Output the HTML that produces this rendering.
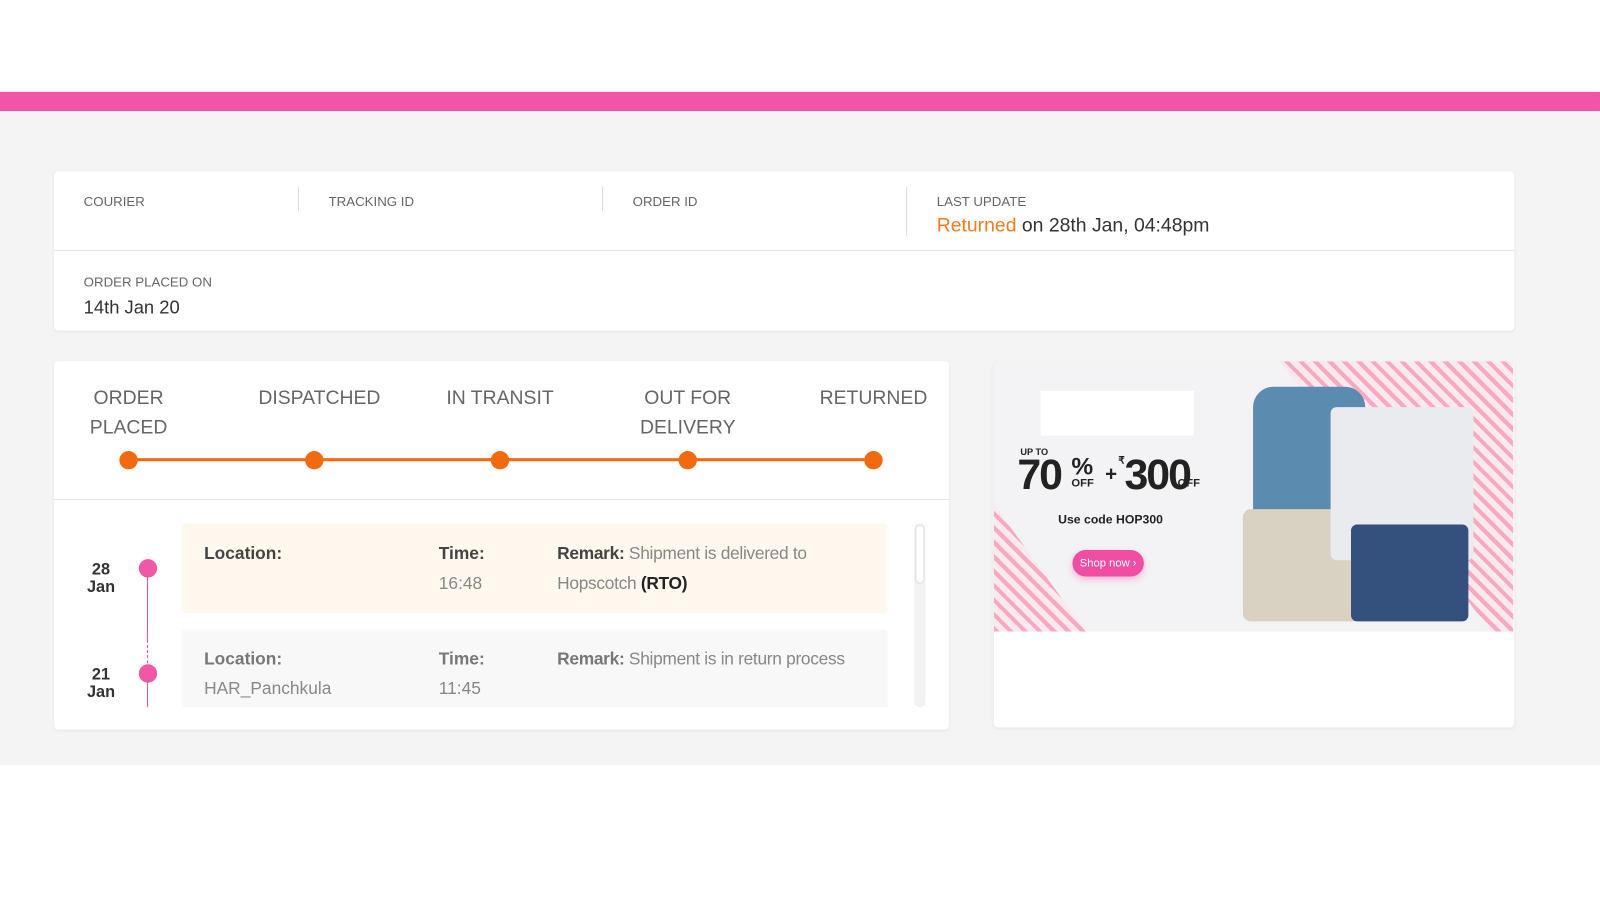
<!DOCTYPE html>
<html><head><meta charset="utf-8"><style>
*{box-sizing:border-box;margin:0;padding:0}
html,body{width:1600px;height:900px;overflow:hidden;background:#fff}
#w{width:1568px;height:882px;position:relative;transform:scale(1.0204);transform-origin:0 0;font-family:"Liberation Sans",sans-serif;color:#333}
.abs{position:absolute}
.pink{left:0;top:90px;width:1568px;height:19px;background:#f255a5}
.gray{left:0;top:109px;width:1568px;height:641px;background:#f4f4f4}
.card{background:#fff;border-radius:4px;box-shadow:0 1px 3px rgba(0,0,0,.06)}
.lbl{font-size:13px;color:#666}
.sep{width:1px;background:#ddd;height:24px;top:183px}
.st{font-size:19px;color:#666;text-align:center;line-height:29px}
.dot{width:18px;height:18px;border-radius:50%;background:#f26a10;top:442px}
.b{font-weight:bold;color:#444}
.t{font-size:17px;color:#888;line-height:29px}
.pd{width:18px;height:18px;border-radius:50%;background:#f057a4}
.dt{font-size:16px;font-weight:bold;color:#333;text-align:center;width:40px;line-height:17px}
</style></head><body><div id="w">
<div class="abs pink"></div>
<div class="abs gray"></div>

<div class="abs card" style="left:53px;top:168px;width:1431px;height:156px"></div>
<div class="abs" style="left:53px;top:245px;width:1431px;height:1px;background:#e6e6e6"></div>
<div class="abs lbl" style="left:82px;top:190px">COURIER</div>
<div class="abs sep" style="left:292px"></div>
<div class="abs lbl" style="left:322px;top:190px">TRACKING ID</div>
<div class="abs sep" style="left:590px"></div>
<div class="abs lbl" style="left:620px;top:190px">ORDER ID</div>
<div class="abs sep" style="left:888px;height:48px"></div>
<div class="abs lbl" style="left:918px;top:190px">LAST UPDATE</div>
<div class="abs" style="left:918px;top:211px;font-size:19px;color:#333"><span style="color:#f7791f">Returned</span> on 28th Jan, 04:48pm</div>
<div class="abs lbl" style="left:82px;top:269px">ORDER PLACED ON</div>
<div class="abs" style="left:82px;top:291px;font-size:18px;color:#333">14th Jan 20</div>

<div class="abs card" style="left:53px;top:354px;width:877px;height:361px"></div>
<div class="abs st" style="left:66px;top:376px;width:120px">ORDER<br>PLACED</div>
<div class="abs st" style="left:248px;top:376px;width:130px">DISPATCHED</div>
<div class="abs st" style="left:430px;top:376px;width:120px">IN TRANSIT</div>
<div class="abs st" style="left:614px;top:376px;width:120px">OUT FOR<br>DELIVERY</div>
<div class="abs st" style="left:796px;top:376px;width:120px">RETURNED</div>
<div class="abs" style="left:126px;top:449px;width:730px;height:3px;background:#f26a10"></div>
<div class="abs dot" style="left:117px"></div>
<div class="abs dot" style="left:299px"></div>
<div class="abs dot" style="left:481px"></div>
<div class="abs dot" style="left:665px"></div>
<div class="abs dot" style="left:847px"></div>
<div class="abs" style="left:53px;top:489px;width:877px;height:1px;background:#e6e6e6"></div>

<div class="abs" style="left:178px;top:513px;width:692px;height:88px;background:#fff8ee;border-radius:4px"></div>
<div class="abs" style="left:178px;top:617px;width:692px;height:76px;background:#f8f8f8;border-radius:4px 4px 0 0"></div>
<div class="abs" style="left:144px;top:557px;width:1px;height:70px;background:#d05a8c"></div>
<div class="abs" style="left:144px;top:627px;width:0;height:33px;border-left:1px dashed #d05a8c"></div>
<div class="abs" style="left:144px;top:660px;width:1px;height:33px;background:#d05a8c"></div>
<div class="abs pd" style="left:136px;top:548px"></div>
<div class="abs pd" style="left:136px;top:651px"></div>
<div class="abs dt" style="left:79px;top:550px">28<br>Jan</div>
<div class="abs dt" style="left:79px;top:653px">21<br>Jan</div>

<div class="abs t" style="left:200px;top:528px"><span class="b">Location:</span></div>
<div class="abs t" style="left:430px;top:528px"><span class="b">Time:</span><br>16:48</div>
<div class="abs t" style="left:546px;top:528px;letter-spacing:-0.3px"><span class="b">Remark:</span> Shipment is delivered to<br>Hopscotch <span class="b" style="color:#222">(RTO)</span></div>
<div class="abs t" style="left:200px;top:631px"><span class="b" style="color:#777">Location:</span><br>HAR_Panchkula</div>
<div class="abs t" style="left:430px;top:631px"><span class="b" style="color:#777">Time:</span><br>11:45</div>
<div class="abs t" style="left:546px;top:631px;letter-spacing:-0.3px"><span class="b" style="color:#777">Remark:</span> Shipment is in return process</div>
<div class="abs" style="left:896px;top:513px;width:11px;height:180px;background:#f2f2f2;border-radius:5px"></div>
<div class="abs" style="left:897px;top:514px;width:9px;height:58px;background:#fff;border:1px solid #ddd;border-radius:5px"></div>

<div class="abs card" style="left:974px;top:354px;width:510px;height:359px"></div>
<div class="abs" style="left:974px;top:354px;width:509px;height:265px;overflow:hidden;background:#f3f2f5">
  <div class="abs" style="left:280px;top:0;width:260px;height:265px;background:repeating-linear-gradient(45deg,#f6a9bf 0 4px,#fbe9ef 4px 10px);clip-path:polygon(0 0,100% 0,100% 100%,80% 100%)"></div>
  <div class="abs" style="left:0;top:140px;width:90px;height:125px;background:repeating-linear-gradient(45deg,#f6a9bf 0 4px,#fbe9ef 4px 10px);clip-path:polygon(0 0,100% 100%,0 100%)"></div>
  <div class="abs" style="left:46px;top:29px;width:150px;height:44px;background:#fff"></div>
  <div class="abs" style="left:26px;top:84px;font-size:9px;font-weight:bold;color:#222">UP TO</div>
  <div class="abs" style="left:23px;top:90px;font-size:42px;font-weight:bold;color:#222;letter-spacing:-2px;line-height:42px">70</div>
  <div class="abs" style="left:76px;top:92px;font-size:24px;font-weight:bold;color:#222;line-height:24px">%</div>
  <div class="abs" style="left:76px;top:114px;font-size:11px;font-weight:bold;color:#222">OFF</div>
  <div class="abs" style="left:109px;top:100px;font-size:20px;font-weight:bold;color:#222">+</div>
  <div class="abs" style="left:122px;top:92px;font-size:10px;font-weight:bold;color:#222">₹</div>
  <div class="abs" style="left:128px;top:90px;font-size:42px;font-weight:bold;color:#222;letter-spacing:-2px;line-height:42px">300</div>
  <div class="abs" style="left:180px;top:114px;font-size:11px;font-weight:bold;color:#222">OFF</div>
  <div class="abs" style="left:63px;top:148px;font-size:12px;font-weight:bold;color:#222">Use code HOP300</div>
  <div class="abs" style="left:77px;top:185px;width:70px;height:26px;border-radius:13px;background:#f04ea3;color:#fff;font-size:11px;line-height:26px;text-align:center;box-shadow:0 3px 6px rgba(240,78,163,.35)">Shop now ›</div>
  <div class="abs" style="left:254px;top:25px;width:110px;height:145px;background:#5b8cb0;border-radius:20px 20px 8px 8px"></div>
  <div class="abs" style="left:244px;top:145px;width:115px;height:110px;background:#d9d1c1;border-radius:8px"></div>
  <div class="abs" style="left:330px;top:45px;width:140px;height:150px;background:#e9ebee;border-radius:6px"></div>
  <div class="abs" style="left:350px;top:160px;width:115px;height:95px;background:#34507d;border-radius:6px"></div>
</div>
</div></body></html>
